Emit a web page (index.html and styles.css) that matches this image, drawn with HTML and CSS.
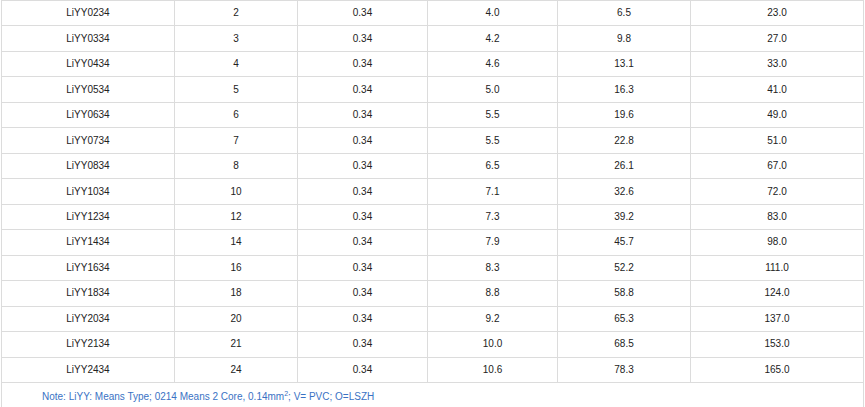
FILE: index.html
```html
<!DOCTYPE html>
<html>
<head>
<meta charset="utf-8">
<link rel="stylesheet" href="styles.css">
</head>
<body>
<table class="spec">
<colgroup>
<col class="c1"><col class="c2"><col class="c3"><col class="c4"><col class="c5"><col class="c6">
</colgroup>
<tbody>
<tr><td>LiYY0234</td><td>2</td><td>0.34</td><td>4.0</td><td>6.5</td><td>23.0</td></tr>
<tr><td>LiYY0334</td><td>3</td><td>0.34</td><td>4.2</td><td>9.8</td><td>27.0</td></tr>
<tr><td>LiYY0434</td><td>4</td><td>0.34</td><td>4.6</td><td>13.1</td><td>33.0</td></tr>
<tr><td>LiYY0534</td><td>5</td><td>0.34</td><td>5.0</td><td>16.3</td><td>41.0</td></tr>
<tr><td>LiYY0634</td><td>6</td><td>0.34</td><td>5.5</td><td>19.6</td><td>49.0</td></tr>
<tr><td>LiYY0734</td><td>7</td><td>0.34</td><td>5.5</td><td>22.8</td><td>51.0</td></tr>
<tr><td>LiYY0834</td><td>8</td><td>0.34</td><td>6.5</td><td>26.1</td><td>67.0</td></tr>
<tr><td>LiYY1034</td><td>10</td><td>0.34</td><td>7.1</td><td>32.6</td><td>72.0</td></tr>
<tr><td>LiYY1234</td><td>12</td><td>0.34</td><td>7.3</td><td>39.2</td><td>83.0</td></tr>
<tr><td>LiYY1434</td><td>14</td><td>0.34</td><td>7.9</td><td>45.7</td><td>98.0</td></tr>
<tr><td>LiYY1634</td><td>16</td><td>0.34</td><td>8.3</td><td>52.2</td><td>111.0</td></tr>
<tr><td>LiYY1834</td><td>18</td><td>0.34</td><td>8.8</td><td>58.8</td><td>124.0</td></tr>
<tr><td>LiYY2034</td><td>20</td><td>0.34</td><td>9.2</td><td>65.3</td><td>137.0</td></tr>
<tr><td>LiYY2134</td><td>21</td><td>0.34</td><td>10.0</td><td>68.5</td><td>153.0</td></tr>
<tr><td>LiYY2434</td><td>24</td><td>0.34</td><td>10.6</td><td>78.3</td><td>165.0</td></tr>
<tr class="note-row"><td colspan="6" class="note">Note: LiYY: Means Type; 0214 Means 2 Core, 0.14mm<sup>2</sup>; V= PVC; O=LSZH</td></tr>
</tbody>
</table>
</body>
</html>
```
FILE: styles.css
```css
html, body {
  margin: 0;
  padding: 0;
  background: #fff;
}
body {
  padding-left: 1px;
  font-family: "Liberation Sans", Arial, sans-serif;
  font-size: 10px;
  color: #333;
}
.spec {
  border-collapse: collapse;
  table-layout: fixed;
  width: 862px;
}
.c1 { width: 173px; }
.c2 { width: 123px; }
.c3 { width: 130px; }
.c4 { width: 130px; }
.c5 { width: 133px; }
.c6 { width: 173px; }
.spec td {
  border: 1px solid #dcdcdc;
  text-align: center;
  vertical-align: middle;
  height: 24.47px;
  padding: 0;
  line-height: 12px;
  color: #222;
}
.spec td.note {
  text-align: left;
  padding: 8px 0 0 40px;
  height: 33px;
  vertical-align: top;
  color: #3a72c4;
}
.note sup {
  font-size: 7px;
  line-height: 0;
  vertical-align: 4px;
}
```
